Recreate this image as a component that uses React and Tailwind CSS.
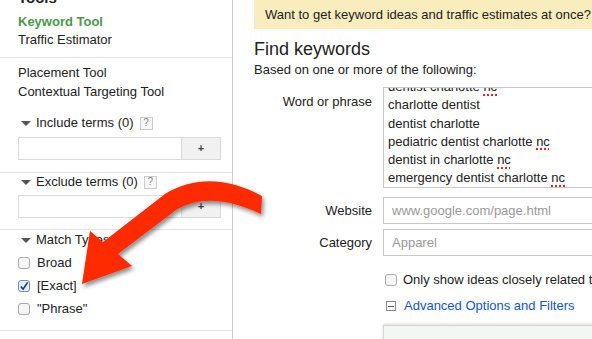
export default function App() {
  const font = { fontFamily: '"Liberation Sans", Arial, sans-serif' };

  const Triangle = () => (
    <span className="inline-block shrink-0 w-0 h-0 mr-[5px] border-l-[5px] border-r-[5px] border-t-[5px] border-l-transparent border-r-transparent border-t-[#555]" />
  );

  const Help = () => (
    <span className="inline-flex shrink-0 items-center justify-center w-[13px] h-[13px] ml-[6px] border border-[#ccc] bg-[#f7f7f7] text-[10px] leading-none text-[#888]">
      ?
    </span>
  );

  const Box = ({ checked }) => (
    <span
      className={
        "inline-flex shrink-0 items-center justify-center w-[12px] h-[12px] rounded-[3px] border " +
        (checked ? "border-[#6d8fbf] bg-[#e4efff]" : "border-[#aaa] bg-[#f6f6f6]")
      }
    >
      {checked && (
        <svg width="11" height="11" viewBox="0 0 11 11">
          <path d="M2 5.5 L4.5 8.5 L9.5 1" fill="none" stroke="#1d3a6b" strokeWidth="1.8" />
        </svg>
      )}
    </span>
  );

  const nc = <span className="underline decoration-dotted decoration-[#e0251b] decoration-2 underline-offset-[3px]">nc</span>;

  return (
    <div className="relative w-[592px] h-[339px] overflow-hidden bg-white text-[13px] text-[#222]" style={font}>
      <div className="flex h-full">
        {/* sidebar */}
        <div className="w-[233px] shrink-0 border-r border-[#ccc] flex flex-col">
          <div className="pl-[18px] mt-[-11px] pb-[8px] border-b border-[#e2e2e2]">
            <div className="text-[15px] font-bold leading-[18px] h-[24px]">Tools</div>
            <div className="font-bold text-[#4a994a] leading-[18px]">Keyword Tool</div>
            <div className="leading-[18px]">Traffic Estimator</div>
          </div>
          <div className="pl-[18px] pt-[6px] leading-[18px]">
            <div>Placement Tool</div>
            <div className="mt-[1px]">Contextual Targeting Tool</div>
          </div>
          <div className="pl-[18px] pr-[11px] pt-[13px] pb-[12px] border-b border-[#e2e2e2]">
            <div className="flex items-center h-[18px] pl-[3px]">
              <Triangle />
              <span>Include terms (0)</span>
              <Help />
            </div>
            <div className="flex mt-[5px] h-[23px] border border-[#d9d9d9]">
              <div className="flex-1 bg-white" />
              <div className="w-[39px] border-l border-[#d9d9d9] bg-[#f1f1f1] flex items-center justify-center text-[11px] font-bold text-[#444]">+</div>
            </div>
          </div>
          <div className="pl-[18px] pr-[11px] pt-0 pb-[11px] border-b border-[#e2e2e2]">
            <div className="flex items-center h-[18px] pl-[3px]">
              <Triangle />
              <span>Exclude terms (0)</span>
              <Help />
            </div>
            <div className="flex mt-[4px] h-[23px] border border-[#d9d9d9]">
              <div className="flex-1 bg-white" />
              <div className="w-[39px] border-l border-[#d9d9d9] bg-[#f1f1f1] flex items-center justify-center text-[11px] font-bold text-[#444]">+</div>
            </div>
          </div>
          <div className="pl-[18px] pt-[1px] pb-[12px] border-b border-[#e2e2e2]">
            <div className="flex items-center h-[18px] pl-[3px]">
              <Triangle />
              <span>Match Types</span>
              <Help />
            </div>
            <div className="flex items-center gap-[7px] h-[18px] mt-[5px]">
              <Box />
              <span>Broad</span>
            </div>
            <div className="flex items-center gap-[7px] h-[18px] mt-[5px]">
              <Box checked />
              <span>[Exact]</span>
            </div>
            <div className="flex items-center gap-[7px] h-[18px] mt-[5px]">
              <Box />
              <span>"Phrase"</span>
            </div>
          </div>
        </div>

        {/* main */}
        <div className="flex-1 min-w-0 pl-[21px]">
          <div className="h-[29px] bg-[#f9edbe] pl-[11px] flex items-center whitespace-nowrap text-[13px]">
            Want to get keyword ideas and traffic estimates at once?
          </div>
          <div className="text-[18px] leading-[22px] mt-[9px]">Find keywords</div>
          <div className="leading-[16px] mt-[2px] whitespace-nowrap">Based on one or more of the following:</div>

          <div className="flex mt-[9px]">
            <div className="w-[118px] shrink-0 text-right pt-[6px] leading-[18px]">Word or phrase</div>
            <div className="ml-[11px] w-[260px] shrink-0 h-[101px] border border-[#c8c8c8] overflow-hidden pl-[4px] whitespace-nowrap">
              <div className="leading-[18.3px] mt-[-10px]">
                <div>dentist charlotte {nc}</div>
                <div>charlotte dentist</div>
                <div>dentist charlotte</div>
                <div>pediatric dentist charlotte {nc}</div>
                <div>dentist in charlotte {nc}</div>
                <div>emergency dentist charlotte {nc}</div>
              </div>
            </div>
          </div>

          <div className="flex items-center mt-[9px]">
            <div className="w-[118px] shrink-0 text-right">Website</div>
            <div className="ml-[11px] w-[260px] shrink-0 h-[27px] border border-[#c8c8c8] flex items-center pl-[8px] text-[#999] whitespace-nowrap">
              www.google.com/page.html
            </div>
          </div>
          <div className="flex items-center mt-[5px]">
            <div className="w-[118px] shrink-0 text-right">Category</div>
            <div className="ml-[11px] w-[260px] shrink-0 h-[27px] border border-[#c8c8c8] flex items-center pl-[8px] text-[#999]">
              Apparel
            </div>
          </div>

          <div className="flex items-center ml-[131px] mt-[15px] h-[18px] gap-[6px] whitespace-nowrap">
            <Box />
            <span>Only show ideas closely related to my search terms</span>
          </div>
          <div className="flex items-center ml-[132px] mt-[8px] h-[18px] whitespace-nowrap">
            <span className="w-[10px] h-[10px] shrink-0 border border-[#888] flex items-center justify-center">
              <span className="w-[6px] h-[1px] bg-[#555]" />
            </span>
            <span className="ml-[8px] text-[#1155cc]">Advanced Options and Filters</span>
          </div>
          <div className="ml-[129px] w-[300px] mt-[10px] h-[40px] border border-[#d4d4d4] bg-[#f3f7f3] shadow-[0_-1px_3px_rgba(0,0,0,0.15)]" />
        </div>
      </div>

      {/* red arrow overlay */}
      <svg className="absolute left-0 top-0 pointer-events-none" width="592" height="339" viewBox="0 0 592 339">
        <defs>
          <filter id="sh" x="-20%" y="-20%" width="140%" height="140%">
            <feDropShadow dx="2" dy="3" stdDeviation="2" floodColor="#000" floodOpacity="0.45" />
          </filter>
        </defs>
        <path
          d="M262 196 C232 180 198 174 165 194 L103 242 L90 231 L82 284 L132 266 L118 254 L176 210 C202 195 230 200 261 214 Z"
          fill="#fe2a06"
          filter="url(#sh)"
        />
      </svg>
    </div>
  );
}
